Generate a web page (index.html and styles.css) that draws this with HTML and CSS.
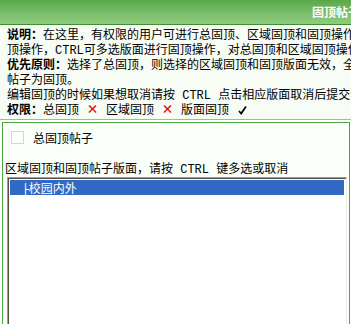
FILE: index.html
```html
<!DOCTYPE html>
<html lang="zh-CN">
<head>
  <meta charset="UTF-8">
  <title>固顶帖子</title>
  <link rel="stylesheet" href="styles.css">
</head>
<body>
<div class="wrap">
  <div class="tablebody">
    <div class="title">固顶帖子</div>
    <div class="desc">
      <div class="line"><b>说明：</b>在这里，有权限的用户可进行总固顶、区域固顶和固顶操作</div>
      <div class="line">顶操作，<span class="mono">CTRL</span>可多选版面进行固顶操作，对总固顶和区域固顶操作</div>
      <div class="line"><b>优先原则：</b>选择了总固顶，则选择的区域固顶和固顶版面无效，全</div>
      <div class="line">帖子为固顶。</div>
      <div class="line">编辑固顶的时候如果想取消请按<span class="mono"> CTRL </span>点击相应版面取消后提交表</div>
      <div class="line"><b>权限：</b>总固顶<span class="no">×</span>区域固顶<span class="no">×</span>版面固顶<svg class="yes" width="9" height="10" viewBox="0 0 9 10"><path d="M1 6 L3.2 8.6 L8 1.5" fill="none" stroke="#000" stroke-width="1.7"/></svg></div>
    </div>
  </div>
  <form class="form" action="#" method="post">
    <div class="row-check">
      <label class="check"><input type="checkbox" name="istop" value="1"><span>总固顶帖子</span></label>
    </div>
    <div class="row-boards">
      <div class="hint">区域固顶和固顶帖子版面，请按<span class="mono"> CTRL </span>键多选或取消</div>
      <div class="listbox">
        <div class="option selected"><span class="tree">├</span>校园内外</div>
      </div>
    </div>
  </form>
</div>
</body>
</html>
```

FILE: styles.css
```css
html, body {
  margin: 0;
  padding: 0;
  overflow: hidden;
}
body {
  font-family: "Noto Sans CJK SC", sans-serif;
  font-size: 12px;
  color: #000;
  background-color: #fff;
  width: 351px;
  height: 324px;
}
.wrap {
  width: 366px;
}
.title {
  height: 24px;
  line-height: 24px;
  text-align: right;
  padding-right: 6px;
  color: #fff;
  font-weight: bold;
  background: linear-gradient(#59a849, #7cc06b 60%, #8fcb7f);
  border-bottom: 1px solid #3d8f30;
}
.desc {
  padding: 1px 0 3px 7px;
  background-color: #f7fcf5;
  border-bottom: 1px solid #8fc883;
}
.line {
  height: 15px;
  line-height: 15px;
  white-space: nowrap;
}
.mono {
  font-family: "Liberation Mono", monospace;
  white-space: pre;
  line-height: 1;
}
.no {
  display: inline-block;
  width: 27px;
  line-height: 1;
  text-align: center;
  color: #e00000;
  font-weight: bold;
}
.yes {
  margin-left: 9px;
  vertical-align: -1px;
}
.form {
  margin: 2px 0 0 2px;
  width: 346px;
  height: 220px;
  border: 1px solid #4aa83c;
  border-bottom: none;
  background-color: #fbfffa;
}
.row-check {
  height: 28px;
  display: flex;
  align-items: center;
}
.check {
  display: flex;
  align-items: center;
}
.check input {
  width: 13px;
  height: 13px;
  margin: 0 9px 0 8px;
  appearance: none;
  border: 1px solid #d4d4d4;
  background-color: #fff;
}
.hint {
  padding: 9px 0 0 2px;
  line-height: 15px;
}
.listbox {
  margin: 1px 2px 0 4px;
  height: 160px;
  border-left: 1px solid #8aa2b8;
  border-top: 1px solid #8aa2b8;
  border-right: 1px solid #e6ece6;
  background-color: #fff;
  box-shadow: inset 1px 1px 0 #5a4e48;
  padding: 2px 2px 0 2px;
}
.option {
  height: 15px;
  line-height: 15px;
  padding-left: 12px;
}
.option.selected {
  background-color: #316ac5;
  color: #fff;
}
.tree {
  font-family: "DejaVu Sans Mono", monospace;
  font-size: 11px;
}
```
